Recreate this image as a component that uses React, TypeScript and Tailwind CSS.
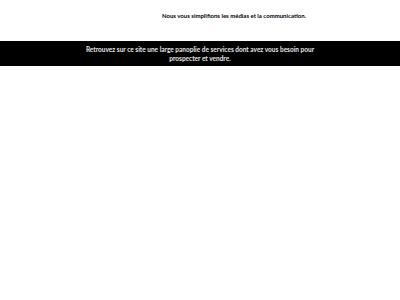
import React from "react";

export default function App() {
  return (
    <div className="w-[400px] h-[300px] bg-white" style={{ fontFamily: "Lato, 'Noto Sans', sans-serif" }}>
      <div className="pt-[12px] h-[41px] flex justify-center pl-[68px]">
        <p className="text-[6px] leading-[7px] font-bold text-black">
          Nous vous simplifions les médias et la communication.
        </p>
      </div>
      <div className="h-[25px] bg-black flex items-center justify-center">
        <p className="w-[238px] text-center text-[6.5px] leading-[9px] font-bold text-[#e5e5e5]">
          Retrouvez sur ce site une large panoplie de services dont avez vous besoin pour prospecter et vendre.
        </p>
      </div>
    </div>
  );
}
